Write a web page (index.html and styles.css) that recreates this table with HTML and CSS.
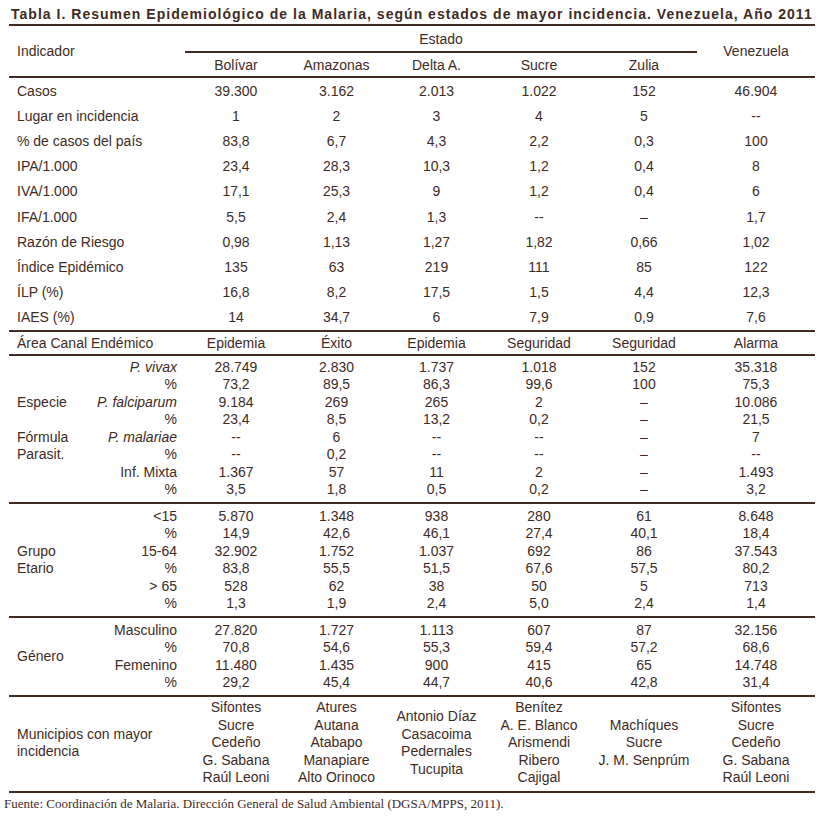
FILE: index.html
```html
<!DOCTYPE html>
<html lang="es">
<head>
<meta charset="utf-8">
<title>Tabla I</title>
<link rel="stylesheet" href="styles.css">
</head>
<body>
<div class="page">
  <div class="title">Tabla I. Resumen Epidemiológico de la Malaria, según estados de mayor incidencia. Venezuela, Año 2011</div>
  <table class="t">
    <colgroup>
      <col class="c-g"><col class="c-s"><col class="c-1"><col class="c-2"><col class="c-3"><col class="c-4"><col class="c-5"><col class="c-v">
    </colgroup>
    <thead>
      <tr class="h1">
        <th colspan="2" rowspan="2" class="lab">Indicador</th>
        <th colspan="5" class="estado">Estado</th>
        <th rowspan="2">Venezuela</th>
      </tr>
      <tr class="h2">
        <th>Bolívar</th><th>Amazonas</th><th>Delta A.</th><th>Sucre</th><th>Zulia</th>
      </tr>
    </thead>
    <tbody class="main">
      <tr><td colspan="2" class="lab">Casos</td><td>39.300</td><td>3.162</td><td>2.013</td><td>1.022</td><td>152</td><td>46.904</td></tr>
      <tr><td colspan="2" class="lab">Lugar en incidencia</td><td>1</td><td>2</td><td>3</td><td>4</td><td>5</td><td>--</td></tr>
      <tr><td colspan="2" class="lab">% de casos del país</td><td>83,8</td><td>6,7</td><td>4,3</td><td>2,2</td><td>0,3</td><td>100</td></tr>
      <tr><td colspan="2" class="lab">IPA/1.000</td><td>23,4</td><td>28,3</td><td>10,3</td><td>1,2</td><td>0,4</td><td>8</td></tr>
      <tr><td colspan="2" class="lab">IVA/1.000</td><td>17,1</td><td>25,3</td><td>9</td><td>1,2</td><td>0,4</td><td>6</td></tr>
      <tr><td colspan="2" class="lab">IFA/1.000</td><td>5,5</td><td>2,4</td><td>1,3</td><td>--</td><td>–</td><td>1,7</td></tr>
      <tr><td colspan="2" class="lab">Razón de Riesgo</td><td>0,98</td><td>1,13</td><td>1,27</td><td>1,82</td><td>0,66</td><td>1,02</td></tr>
      <tr><td colspan="2" class="lab">Índice Epidémico</td><td>135</td><td>63</td><td>219</td><td>111</td><td>85</td><td>122</td></tr>
      <tr><td colspan="2" class="lab">ÍLP (%)</td><td>16,8</td><td>8,2</td><td>17,5</td><td>1,5</td><td>4,4</td><td>12,3</td></tr>
      <tr><td colspan="2" class="lab">IAES (%)</td><td>14</td><td>34,7</td><td>6</td><td>7,9</td><td>0,9</td><td>7,6</td></tr>
    </tbody>
    <tbody class="area">
      <tr><td colspan="2" class="lab">Área Canal Endémico</td><td>Epidemia</td><td>Éxito</td><td>Epidemia</td><td>Seguridad</td><td>Seguridad</td><td>Alarma</td></tr>
    </tbody>
    <tbody class="sub s3">
      <tr><td class="grp"></td><td class="sl"><i>P. vivax</i></td><td>28.749</td><td>2.830</td><td>1.737</td><td>1.018</td><td>152</td><td>35.318</td></tr>
      <tr><td class="grp"></td><td class="sl">%</td><td>73,2</td><td>89,5</td><td>86,3</td><td>99,6</td><td>100</td><td>75,3</td></tr>
      <tr><td class="grp">Especie</td><td class="sl"><i>P. falciparum</i></td><td>9.184</td><td>269</td><td>265</td><td>2</td><td>–</td><td>10.086</td></tr>
      <tr><td class="grp"></td><td class="sl">%</td><td>23,4</td><td>8,5</td><td>13,2</td><td>0,2</td><td>–</td><td>21,5</td></tr>
      <tr><td class="grp">Fórmula</td><td class="sl"><i>P. malariae</i></td><td>--</td><td>6</td><td>--</td><td>--</td><td>–</td><td>7</td></tr>
      <tr><td class="grp">Parasit.</td><td class="sl">%</td><td>--</td><td>0,2</td><td>--</td><td>--</td><td>–</td><td>--</td></tr>
      <tr><td class="grp"></td><td class="sl">Inf. Mixta</td><td>1.367</td><td>57</td><td>11</td><td>2</td><td>–</td><td>1.493</td></tr>
      <tr><td class="grp"></td><td class="sl">%</td><td>3,5</td><td>1,8</td><td>0,5</td><td>0,2</td><td>–</td><td>3,2</td></tr>
    </tbody>
    <tbody class="sub s4">
      <tr><td class="grp"></td><td class="sl">&lt;15</td><td>5.870</td><td>1.348</td><td>938</td><td>280</td><td>61</td><td>8.648</td></tr>
      <tr><td class="grp"></td><td class="sl">%</td><td>14,9</td><td>42,6</td><td>46,1</td><td>27,4</td><td>40,1</td><td>18,4</td></tr>
      <tr><td class="grp">Grupo</td><td class="sl">15-64</td><td>32.902</td><td>1.752</td><td>1.037</td><td>692</td><td>86</td><td>37.543</td></tr>
      <tr><td class="grp">Etario</td><td class="sl">%</td><td>83,8</td><td>55,5</td><td>51,5</td><td>67,6</td><td>57,5</td><td>80,2</td></tr>
      <tr><td class="grp"></td><td class="sl">&gt; 65</td><td>528</td><td>62</td><td>38</td><td>50</td><td>5</td><td>713</td></tr>
      <tr><td class="grp"></td><td class="sl">%</td><td>1,3</td><td>1,9</td><td>2,4</td><td>5,0</td><td>2,4</td><td>1,4</td></tr>
    </tbody>
    <tbody class="sub s5">
      <tr><td class="grp" rowspan="4">Género</td><td class="sl">Masculino</td><td>27.820</td><td>1.727</td><td>1.113</td><td>607</td><td>87</td><td>32.156</td></tr>
      <tr><td class="sl">%</td><td>70,8</td><td>54,6</td><td>55,3</td><td>59,4</td><td>57,2</td><td>68,6</td></tr>
      <tr><td class="sl">Femenino</td><td>11.480</td><td>1.435</td><td>900</td><td>415</td><td>65</td><td>14.748</td></tr>
      <tr><td class="sl">%</td><td>29,2</td><td>45,4</td><td>44,7</td><td>40,6</td><td>42,8</td><td>31,4</td></tr>
    </tbody>
    <tbody class="muni">
      <tr>
        <td colspan="2" class="lab">Municipios con mayor incidencia</td>
        <td>Sifontes<br>Sucre<br>Cedeño<br>G. Sabana<br>Raúl Leoni</td>
        <td>Atures<br>Autana<br>Atabapo<br>Manapiare<br>Alto Orinoco</td>
        <td>Antonio Díaz<br>Casacoima<br>Pedernales<br>Tucupita</td>
        <td>Benítez<br>A. E. Blanco<br>Arismendi<br>Ribero<br>Cajigal</td>
        <td>Machíques<br>Sucre<br>J. M. Senprúm</td>
        <td>Sifontes<br>Sucre<br>Cedeño<br>G. Sabana<br>Raúl Leoni</td>
      </tr>
    </tbody>
  </table>
  <p class="source">Fuente: Coordinación de Malaria. Dirección General de Salud Ambiental (DGSA/MPPS, 2011).</p>
</div>
</body>
</html>
```

FILE: styles.css
```css
html, body {
  margin: 0;
  padding: 0;
  background: #ffffff;
}

body {
  color: #3e2b1f;
  font-family: "Liberation Sans", Arial, sans-serif;
  font-size: 14px;
}

.page {
  width: 806px;
  padding: 6px 0 0 9px;
}

.title {
  font-weight: bold;
  font-size: 14px;
  line-height: 16px;
  letter-spacing: 1.02px;
  padding: 0 0 2px 2px;
  border-bottom: 2px solid #3e2b1f;
  white-space: nowrap;
}

.t {
  width: 806px;
  table-layout: fixed;
  border-collapse: separate;
  border-spacing: 0;
  border-bottom: 2px solid #3e2b1f;
}

.c-g { width: 81px; }
.c-s { width: 95px; }
.c-1 { width: 102px; }
.c-2 { width: 99px; }
.c-3 { width: 101px; }
.c-4 { width: 104px; }
.c-5 { width: 106px; }
.c-v { width: 118px; }

.t th,
.t td {
  font-weight: normal;
  text-align: center;
  vertical-align: middle;
  line-height: 16px;
  padding: 0;
  white-space: nowrap;
}

.t .lab {
  text-align: left;
  padding-left: 8px;
}

.h1 th {
  padding-top: 4.5px;
  padding-bottom: 4.5px;
}

.h1 th.estado {
  border-bottom: 2px solid #3e2b1f;
}

.h2 th {
  padding-top: 3.5px;
  padding-bottom: 3.5px;
}

tbody > tr:first-child > td {
  border-top: 2px solid #3e2b1f;
}

.main td {
  padding-top: 4.6px;
  padding-bottom: 4.6px;
}

.area td {
  padding-top: 3px;
  padding-bottom: 3px;
}

.sub td {
  line-height: 17.5px;
}

.s3 tr:first-child > td { padding-top: 3px; }
.s3 tr:last-child > td { padding-bottom: 3px; }
.s4 tr:first-child > td,
.s5 tr:first-child > td { padding-top: 4px; }
.s4 tr:last-child > td,
.s5 tr:last-child > td { padding-bottom: 3px; }
.s5 td.grp { padding-bottom: 3px; }

.t td.grp {
  text-align: left;
  padding-left: 8px;
}

.t td.sl {
  text-align: right;
  padding-right: 8px;
}

.muni td {
  line-height: 17.5px;
  padding-top: 2.5px;
  padding-bottom: 4px;
}

.muni td.lab {
  white-space: normal;
  padding-right: 10px;
}

.source {
  margin: 4px 0 0 -5px;
  font-family: "Liberation Serif", "Times New Roman", serif;
  font-size: 13px;
  line-height: 14px;
  color: #3e2b1f;
}
```
